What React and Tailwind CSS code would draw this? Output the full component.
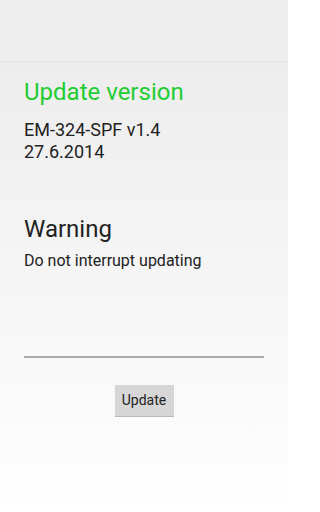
import React from "react";

// Firmware update screen
export default function App() {
  return (
    <div
      className="w-[288px] h-[512px] flex flex-col bg-white"
      style={{ fontFamily: "Roboto, 'Noto Sans', sans-serif" }}
    >
      {/* action bar */}
      <div className="h-[62px] shrink-0 bg-[#eeeeee] border-b border-[#e2e2e2]" />

      <div className="flex-1 flex flex-col px-6 bg-gradient-to-b from-[#ededed] via-[#fbfbfb] via-80% to-white">
        <h1 className="mt-[16px] text-[24px] leading-[28px] text-[#22cc33]">Update version</h1>

        <div className="mt-[13px] text-[18px] leading-[22px] text-[#222222]">
          <p>EM-324-SPF v1.4</p>
          <p>27.6.2014</p>
        </div>

        <h2 className="mt-[52px] text-[24px] leading-[28px] text-[#222222]">Warning</h2>
        <p className="mt-[8px] text-[16px] leading-[19px] text-[#222222]">Do not interrupt updating</p>

        {/* progress bar */}
        <div className="mt-[86px] h-[2px] bg-[#aaaaaa]" />

        <div className="mt-[27px] flex justify-center">
          <button className="w-[59px] h-[32px] bg-[#d6d6d6] border-b border-[#b8b8b8] text-[14px] text-[#222222]">
            Update
          </button>
        </div>
      </div>
    </div>
  );
}
